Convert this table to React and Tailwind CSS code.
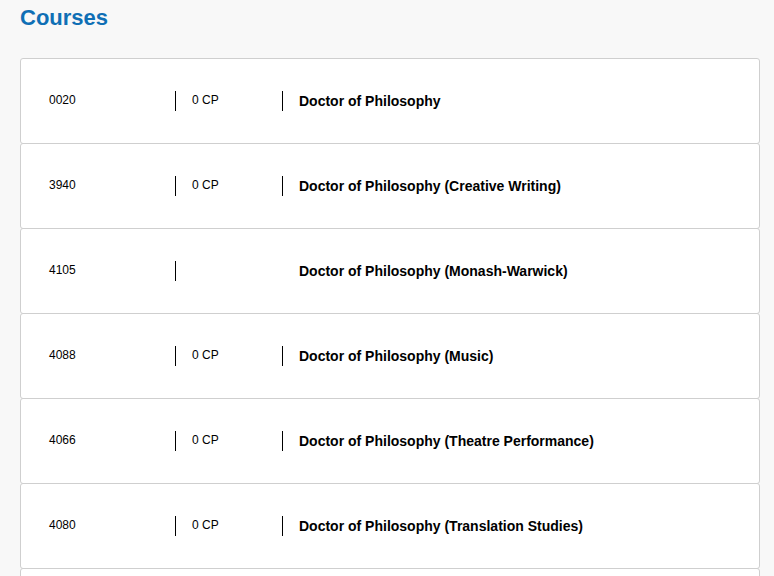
import React from 'react';

const courses = [
  { code: '0020', cp: '0 CP', title: 'Doctor of Philosophy' },
  { code: '3940', cp: '0 CP', title: 'Doctor of Philosophy (Creative Writing)' },
  { code: '4105', cp: '', title: 'Doctor of Philosophy (Monash-Warwick)' },
  { code: '4088', cp: '0 CP', title: 'Doctor of Philosophy (Music)' },
  { code: '4066', cp: '0 CP', title: 'Doctor of Philosophy (Theatre Performance)' },
  { code: '4080', cp: '0 CP', title: 'Doctor of Philosophy (Translation Studies)' },
  { code: '4090', cp: '0 CP', title: 'Doctor of Philosophy (Visual Arts)' },
];

const CourseRow = ({ course, first }) => (
  <div
    className={`flex h-[86px] items-center rounded-[3px] border border-[#cfcfcf] bg-white px-[28px] ${
      first ? '' : '-mt-px'
    }`}
  >
    <div className="-mt-[2px] w-[126px] text-[12px] text-black">{course.code}</div>
    <div className="flex h-[20px] w-[107px] items-center border-l border-black pl-4 text-[12px] text-black">
      <span className="-mt-[3px]">{course.cp}</span>
    </div>
    <div
      className={`flex h-[20px] items-center pl-4 text-[14px] font-bold text-black ${
        course.cp ? 'border-l border-black' : 'border-l border-transparent'
      }`}
    >
      {course.title}
    </div>
  </div>
);

const App = () => {
  return (
    <div className="min-h-screen bg-[#f8f8f8] pl-5 pr-[14px] pt-[3px] font-['Liberation_Sans',Arial,sans-serif]">
      <h1 className="text-[22px] font-bold leading-[30px] text-[#0f6fb5]">Courses</h1>
      <div className="mt-[25px] flex flex-col">
        {courses.map((c, i) => (
          <CourseRow key={c.code} course={c} first={i === 0} />
        ))}
      </div>
    </div>
  );
};

export default App;
